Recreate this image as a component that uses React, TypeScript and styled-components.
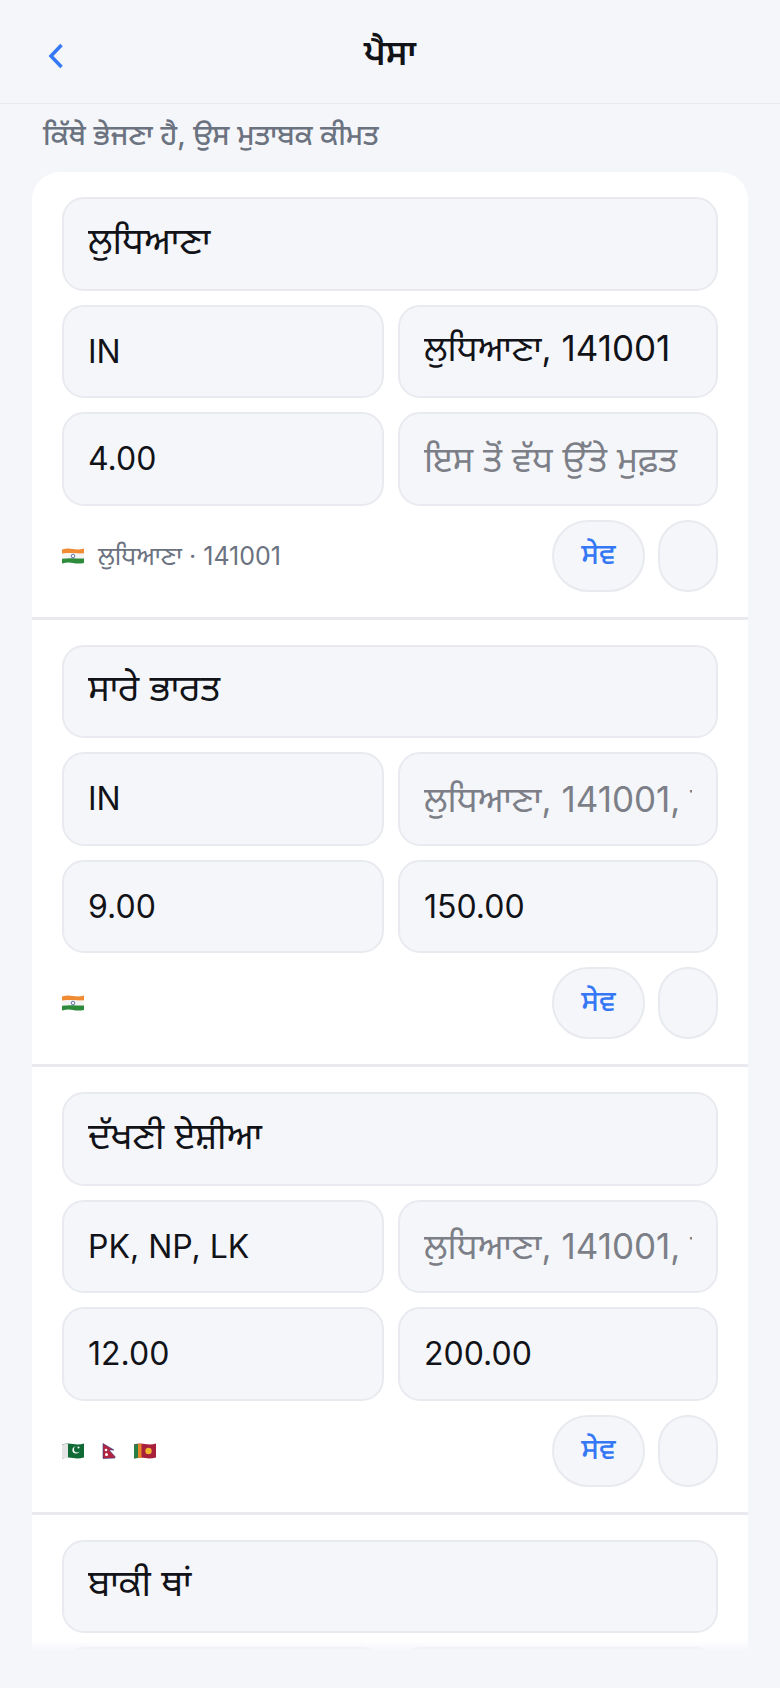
import React from 'react';
import styled, { createGlobalStyle } from 'styled-components';

const GlobalStyle = createGlobalStyle`
  html, body {
    margin: 0;
    padding: 0;
    background: #f5f6fa;
  }
  * {
    box-sizing: border-box;
  }
`;

const FONT = `Inter, "Noto Sans", "Noto Sans Gurmukhi", "DejaVu Sans", sans-serif`;

const Screen = styled.div`
  width: 780px;
  height: 1688px;
  display: flex;
  flex-direction: column;
  overflow: hidden;
  background: #f5f6fa;
  font-family: ${FONT};
`;

const Header = styled.header`
  height: 104px;
  flex: none;
  display: grid;
  grid-template-columns: 100px 1fr 100px;
  align-items: center;
  border-bottom: 1px solid #e8eaef;
`;

const BackButton = styled.button`
  all: unset;
  display: flex;
  width: 20px;
  height: 26px;
  margin: 9px 0 0 46px;
  color: #3478f6;
`;

const Title = styled.h1`
  margin: 6px 0 0;
  text-align: center;
  font-size: 35px;
  font-weight: 600;
  color: #111318;
`;

const Subtitle = styled.p`
  margin: 0;
  padding: 13px 0 0 43px;
  height: 68px;
  flex: none;
  font-size: 28.4px;
  line-height: 36px;
  font-weight: 500;
  color: #6b7280;
`;

const Viewport = styled.div`
  flex: 1;
  min-height: 0;
  position: relative;
  overflow: hidden;
  padding: 0 32px;
  &::after {
    content: '';
    position: absolute;
    left: 0;
    right: 0;
    bottom: 0;
    height: 10px;
    background: linear-gradient(rgba(245, 246, 250, 0), rgba(245, 246, 250, 0.9));
  }
`;

const Card = styled.section`
  background: #fff;
  border-radius: 28px 28px 0 0;
`;

const Zone = styled.div`
  display: flex;
  flex-direction: column;
  gap: 14px;
  padding: 25px 30px 25px;
  & + & {
    border-top: 3px solid #e8eaef;
  }
`;

const FieldRow = styled.div`
  display: grid;
  grid-template-columns: 322px 320px;
  gap: 14px;
`;

// Gurmukhi in the reference runs wider than the installed face, so those fields get a bigger size
const Field = styled.input<{ $size?: number }>`
  width: 100%;
  min-width: 0;
  height: 93.5px;
  padding: 0 24px;
  border: 2px solid #e8eaef;
  border-radius: 22px;
  background: #f5f6fa;
  outline: none;
  font-family: ${FONT};
  font-size: ${p => p.$size ?? 32}px;
  color: #111318;
  &::placeholder {
    color: #7c7f87;
    opacity: 1;
  }
`;

const Footer = styled.div`
  display: flex;
  align-items: center;
  justify-content: space-between;
`;

const Regions = styled.div`
  display: flex;
  align-items: center;
  gap: 14px;
  font-size: 25px;
  color: #6b7280;
`;

const RegionLabel = styled.span`
  padding-top: 4px;
`;

const FlagList = styled.div`
  display: flex;
  align-items: center;
  gap: 14px;
`;

const Actions = styled.div`
  display: flex;
  gap: 13px;
`;

const PillButton = styled.button<{ $wide?: boolean }>`
  width: ${p => (p.$wide ? '93px' : '60px')};
  height: 72px;
  padding: 0;
  border: 2px solid #e8eaef;
  border-radius: 36px;
  background: #f5f6fa;
  font-family: ${FONT};
  font-size: 29px;
  font-weight: 500;
  color: #3478f6;
`;

type FlagCode = 'in' | 'pk' | 'np' | 'lk';

const Flag: React.FC<{ code: FlagCode }> = ({ code }) => {
  if (code === 'in') {
    return (
      <svg width="22" height="16" viewBox="0 0 22 16">
        <path d="M0 1.500Q5 0 11 1T22 .5v5Q16 6 11 5.300T0 5.700z" fill="#f08a33" />
        <path d="M0 5.700Q5 5 11 5.300T22 5.500v5Q16 11 11 10.300T0 10.700z" fill="#f4f4f4" />
        <path d="M0 10.700Q5 10 11 10.300T22 10.500v4.500Q16 16 11 15T0 15.500z" fill="#2e8b3c" />
        <circle cx="11" cy="8" r="1.800" fill="none" stroke="#2a3f8f" strokeWidth=".7" />
      </svg>
    );
  }
  if (code === 'pk') {
    return (
      <svg width="22" height="16" viewBox="0 0 22 16">
        <path d="M0 1.500Q5 0 11 1T22 .5v14Q16 16 11 15T0 15.500z" fill="#0f6a35" />
        <path d="M0 1.500Q3 .7 6 .7v14.500Q3 15 0 15.500z" fill="#e4e4e4" />
        <circle cx="14" cy="7" r="3.600" fill="#fff" />
        <circle cx="15.200" cy="6.200" r="3.200" fill="#0f6a35" />
        <circle cx="16.500" cy="4.500" r="1" fill="#fff" />
      </svg>
    );
  }
  if (code === 'np') {
    return (
      <svg width="22" height="16" viewBox="-4 0 22 16">
        <path d="M1 .5L12 7H7L13 13.500V15L1 15.500z" fill="#b5223f" stroke="#2f3f8a" strokeWidth=".6" />
        <circle cx="4" cy="7" r="1.300" fill="#fff" />
        <circle cx="4.500" cy="11.500" r="1.500" fill="#fff" />
      </svg>
    );
  }
  return (
    <svg width="22" height="16" viewBox="0 0 22 16">
      <path d="M0 1.500Q5 0 11 1T22 .5v14Q16 16 11 15T0 15.500z" fill="#a8203b" />
      <path d="M0 1.500Q2 1 4 .9v14.200Q2 15.200 0 15.500z" fill="#2a7d45" />
      <path d="M4 .9L7.500 .8v14.300L4 15.100z" fill="#e8862a" />
      <circle cx="14.500" cy="8" r="3.200" fill="#f0b42e" />
    </svg>
  );
};

interface ZoneData {
  name: string;
  countries: string;
  cities: string;
  citiesHint: string;
  price?: string;
  freeOver?: string;
  flags?: FlagCode[];
  label?: string;
}

const FREE_HINT = 'ਇਸ ਤੋਂ ਵੱਧ ਉੱਤੇ ਮੁਫ਼ਤ';
const CITY_HINT = 'ਲੁਧਿਆਣਾ, 141001, ਮੁੰਬਈ';

// the last zone runs off the bottom of the screen, only its first rows are ever seen
const zones: ZoneData[] = [
  { name: 'ਲੁਧਿਆਣਾ', countries: 'IN', cities: 'ਲੁਧਿਆਣਾ, 141001', citiesHint: CITY_HINT, price: '4.00', freeOver: '', flags: ['in'], label: 'ਲੁਧਿਆਣਾ · 141001' },
  { name: 'ਸਾਰੇ ਭਾਰਤ', countries: 'IN', cities: '', citiesHint: CITY_HINT, price: '9.00', freeOver: '150.00', flags: ['in'] },
  { name: 'ਦੱਖਣੀ ਏਸ਼ੀਆ', countries: 'PK, NP, LK', cities: '', citiesHint: CITY_HINT, price: '12.00', freeOver: '200.00', flags: ['pk', 'np', 'lk'] },
  { name: 'ਬਾਕੀ ਥਾਂ', countries: '', cities: '', citiesHint: '' },
];

export default function App() {
  return (
    <Screen>
      <GlobalStyle />
      <Header>
        <BackButton aria-label="back">
          <svg width="20" height="26" viewBox="0 0 20 26" fill="none" stroke="currentColor" strokeWidth="3.500" strokeLinejoin="miter">
            <path d="M15.500 2L5 13l10.500 11" />
          </svg>
        </BackButton>
        <Title>ਪੈਸਾ</Title>
      </Header>
      <Subtitle>ਕਿੱਥੇ ਭੇਜਣਾ ਹੈ, ਉਸ ਮੁਤਾਬਕ ਕੀਮਤ</Subtitle>
      <Viewport>
        <Card>
          {zones.map(zone => (
            <Zone key={zone.name}>
              <Field readOnly value={zone.name} $size={36.5} />
              <FieldRow>
                <Field readOnly value={zone.countries} />
                <Field readOnly value={zone.cities} placeholder={zone.citiesHint} $size={35} />
              </FieldRow>
              {zone.price && (
                <>
                  <FieldRow>
                    <Field readOnly value={zone.price} />
                    <Field readOnly value={zone.freeOver} placeholder={FREE_HINT} $size={zone.freeOver ? 32 : 35} />
                  </FieldRow>
                  <Footer>
                    <Regions>
                      <FlagList>
                        {zone.flags?.map(code => (
                          <Flag key={code} code={code} />
                        ))}
                      </FlagList>
                      {zone.label && <RegionLabel>{zone.label}</RegionLabel>}
                    </Regions>
                    <Actions>
                      <PillButton $wide>ਸੇਵ</PillButton>
                      <PillButton aria-label="delete" />
                    </Actions>
                  </Footer>
                </>
              )}
            </Zone>
          ))}
        </Card>
      </Viewport>
      <BottomBar />
    </Screen>
  );
}

const BottomBar = styled.div`
  height: 38px;
  flex: none;
  background: #f5f6fa;
`;
